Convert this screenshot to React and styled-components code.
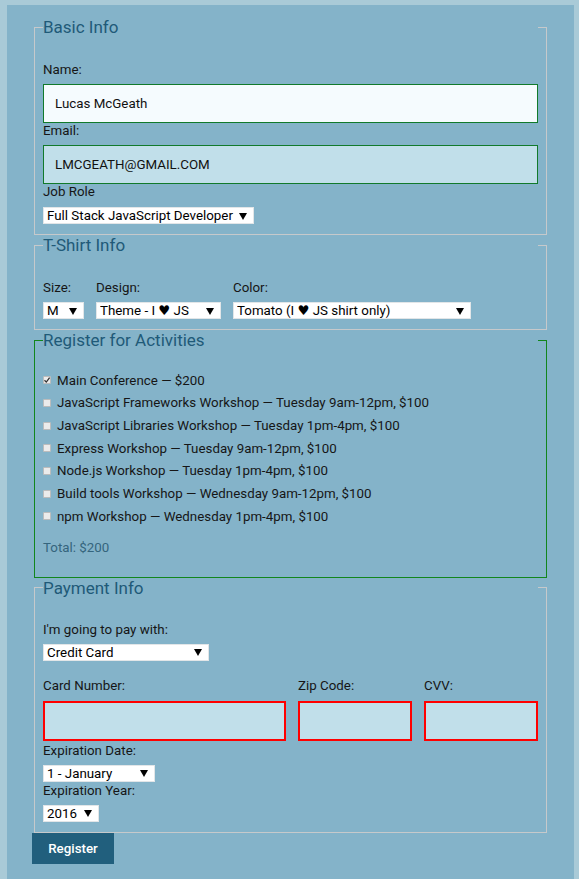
import React from 'react';
import styled, { createGlobalStyle } from 'styled-components';

const GlobalStyle = createGlobalStyle`
  html, body {
    margin: 0;
    padding: 0;
    background: #a9cad7;
  }
  body {
    font-family: Roboto, 'Liberation Sans', sans-serif;
  }
`;

const arrow = `url("data:image/svg+xml,%3Csvg xmlns='http://www.w3.org/2000/svg' width='8' height='8'%3E%3Cpath d='M0 1h8L4 8z' fill='%23000'/%3E%3C/svg%3E")`;
const tick = `url("data:image/svg+xml,%3Csvg xmlns='http://www.w3.org/2000/svg' width='8' height='8'%3E%3Cpath d='M1.5 4.2l1.8 1.9L6.6 1.6' stroke='%23333' stroke-width='1.3' fill='none'/%3E%3C/svg%3E")`;

const Page = styled.form`
  width: 567px;
  min-height: 874px;
  box-sizing: border-box;
  margin: 5px 0 0 7px;
  padding: 12px 25px 30px;
  background: #84b3c9;
`;

const Fieldset = styled.fieldset`
  margin: 0 2px;
  min-width: 0;
  padding: ${p => p.$top}px 8px ${p => p.$bottom}px;
  border: 1px solid ${p => (p.$green ? '#12861c' : '#c6c9cb')};
`;

const Legend = styled.legend`
  width: 100%;
  box-sizing: border-box;
  padding: 0;
  font-size: 17px;
  line-height: 20px;
  color: #1f5a78;
`;

const Label = styled.label`
  display: block;
  font-size: 13.33px;
  line-height: 16px;
  color: #161616;
  margin-bottom: ${p => p.$gap ?? 6}px;
`;

const TextInput = styled.input`
  display: block;
  width: ${p => (p.$w ? `${p.$w}px` : '100%')};
  height: ${p => (p.$error ? 40 : 39)}px;
  box-sizing: border-box;
  margin: 0;
  padding: 0 11px;
  border: ${p => (p.$error ? '2px solid #f00' : '1px solid #117a2b')};
  background: ${p => (p.$active ? '#f5fbfe' : '#c1dfea')};
  font: 13.33px Roboto, 'Liberation Sans', sans-serif;
  color: #111;
  outline: none;
  border-radius: 0;
`;

const Select = styled.select`
  display: block;
  appearance: none;
  width: ${p => p.$w}px;
  height: 17px;
  box-sizing: border-box;
  margin: 0 0 ${p => p.$after ?? 0}px;
  padding: 0 0 0 3px;
  border: 1px solid #e2e6e8;
  border-radius: 0;
  background: #fff ${arrow} no-repeat right 6px center / 8px 8px;
  font: 13.33px Roboto, 'DejaVu Sans', sans-serif;
  line-height: 15px;
  color: #000;
  outline: none;
`;

const Row = styled.div`
  display: flex;
  gap: 12px;
  margin-bottom: ${p => p.$after ?? 0}px;
`;

const Column = styled.div`
  display: flex;
  flex-direction: column;
`;

const Activity = styled.label`
  display: flex;
  align-items: center;
  gap: 6px;
  height: 22.67px;
  font-size: 13.33px;
  color: #161616;
`;

const Check = styled.input`
  appearance: none;
  width: 8px;
  height: 8px;
  margin: 0;
  box-sizing: border-box;
  border: 1px solid #bcbcbc;
  background: #ebebeb;
  border-radius: 1px;
  &:checked {
    background: #ebebeb ${tick} no-repeat center / 8px 8px;
  }
`;

const Total = styled.p`
  margin: 12px 0 0;
  font-size: 13.33px;
  line-height: 16px;
  color: #35657d;
`;

const Spacer = styled.div`
  height: ${p => p.$h}px;
`;

const Button = styled.button`
  display: block;
  width: 82px;
  height: 31px;
  margin: 0;
  border: none;
  border-radius: 0;
  background: #215f7d;
  color: #fff;
  font: 500 13.33px Roboto, 'Liberation Sans', sans-serif;
`;

const activities = [
  ['Main Conference — $200', true],
  ['JavaScript Frameworks Workshop — Tuesday 9am-12pm, $100', false],
  ['JavaScript Libraries Workshop — Tuesday 1pm-4pm, $100', false],
  ['Express Workshop — Tuesday 9am-12pm, $100', false],
  ['Node.js Workshop — Tuesday 1pm-4pm, $100', false],
  ['Build tools Workshop — Wednesday 9am-12pm, $100', false],
  ['npm Workshop — Wednesday 1pm-4pm, $100', false],
];

export default function App() {
  return (
    <>
      <GlobalStyle />
      <Page onSubmit={e => e.preventDefault()}>
        <Fieldset $top={25} $bottom={10}>
          <Legend>Basic Info</Legend>
          <Label htmlFor="name">Name:</Label>
          <TextInput id="name" $active defaultValue="Lucas McGeath" autoFocus />
          <Label htmlFor="mail">Email:</Label>
          <TextInput id="mail" defaultValue="LMCGEATH@GMAIL.COM" />
          <Label htmlFor="title" $gap={7}>Job Role</Label>
          <Select id="title" $w={211}>
            <option>Full Stack JavaScript Developer</option>
          </Select>
        </Fieldset>

        <Fieldset $top={25} $bottom={10}>
          <Legend>T-Shirt Info</Legend>
          <Row>
            <Column>
              <Label>Size:</Label>
              <Select $w={41}><option>M</option></Select>
            </Column>
            <Column>
              <Label>Design:</Label>
              <Select $w={125}><option>Theme - I ♥ JS</option></Select>
            </Column>
            <Column>
              <Label>Color:</Label>
              <Select $w={238}><option>Tomato (I ♥ JS shirt only)</option></Select>
            </Column>
          </Row>
        </Fieldset>

        <Fieldset $green $top={19} $bottom={21}>
          <Legend>Register for Activities</Legend>
          {activities.map(([text, on]) => (
            <Activity key={text}>
              <Check type="checkbox" defaultChecked={on} />
              {text}
            </Activity>
          ))}
          <Total>Total: $200</Total>
        </Fieldset>

        <Fieldset $top={24} $bottom={10}>
          <Legend>Payment Info</Legend>
          <Label>I'm going to pay with:</Label>
          <Select $w={166}><option>Credit Card</option></Select>
          <Spacer $h={17} />
          <Row $after={2}>
            <Column>
              <Label $gap={7}>Card Number:</Label>
              <TextInput $error $w={243} />
            </Column>
            <Column>
              <Label $gap={7}>Zip Code:</Label>
              <TextInput $error $w={114} />
            </Column>
            <Column>
              <Label $gap={7}>CVV:</Label>
              <TextInput $error $w={114} />
            </Column>
          </Row>
          <Label>Expiration Date:</Label>
          <Select $w={112} $after={1}><option>1 - January</option></Select>
          <Label $gap={6}>Expiration Year:</Label>
          <Select $w={56}><option>2016</option></Select>
        </Fieldset>
        <Button type="submit">Register</Button>
      </Page>
    </>
  );
}
